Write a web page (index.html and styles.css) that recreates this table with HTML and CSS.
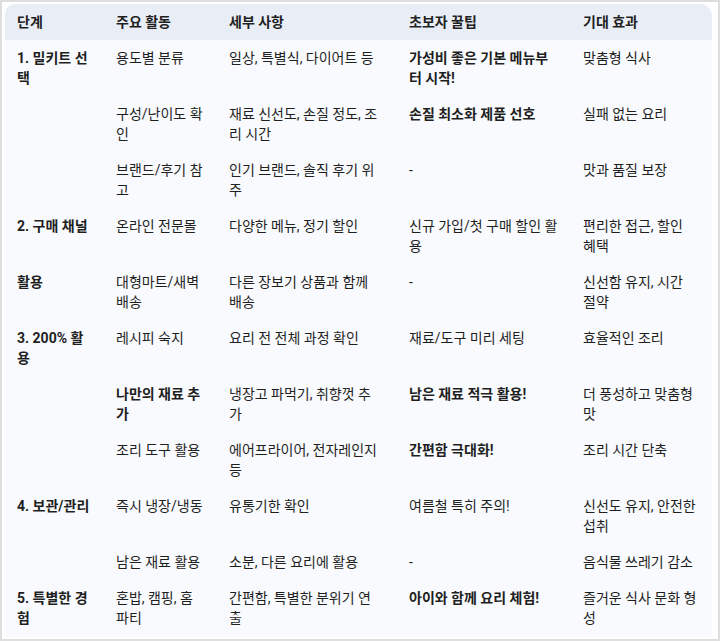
FILE: index.html
```html
<!DOCTYPE html>
<html lang="ko">
<head>
<meta charset="utf-8">
<link rel="stylesheet" href="styles.css">
</head>
<body>
<div class="frame">
  <div class="card">
    <table class="grid">
      <colgroup>
        <col class="c1"><col class="c2"><col class="c3"><col class="c4"><col class="c5">
      </colgroup>
      <thead>
        <tr><th>단계</th><th>주요 활동</th><th>세부 사항</th><th>초보자 꿀팁</th><th>기대 효과</th></tr>
      </thead>
      <tbody>
        <tr><td class="b">1. 밀키트 선택</td><td>용도별 분류</td><td>일상, 특별식, 다이어트 등</td><td class="b">가성비 좋은 기본 메뉴부터 시작!</td><td>맞춤형 식사</td></tr>
        <tr><td></td><td>구성/난이도 확인</td><td>재료 신선도, 손질 정도, 조리 시간</td><td class="b">손질 최소화 제품 선호</td><td>실패 없는 요리</td></tr>
        <tr><td></td><td>브랜드/후기 참고</td><td>인기 브랜드, 솔직 후기 위주</td><td>-</td><td>맛과 품질 보장</td></tr>
        <tr><td class="b">2. 구매 채널</td><td>온라인 전문몰</td><td>다양한 메뉴, 정기 할인</td><td>신규 가입/첫 구매 할인 활용</td><td>편리한 접근, 할인 혜택</td></tr>
        <tr><td class="b">활용</td><td>대형마트/새벽 배송</td><td>다른 장보기 상품과 함께 배송</td><td>-</td><td>신선함 유지, 시간 절약</td></tr>
        <tr><td class="b">3. 200% 활용</td><td>레시피 숙지</td><td>요리 전 전체 과정 확인</td><td>재료/도구 미리 세팅</td><td>효율적인 조리</td></tr>
        <tr><td></td><td class="b">나만의 재료 추가</td><td>냉장고 파먹기, 취향껏 추가</td><td class="b">남은 재료 적극 활용!</td><td>더 풍성하고 맞춤형 맛</td></tr>
        <tr><td></td><td>조리 도구 활용</td><td>에어프라이어, 전자레인지 등</td><td class="b">간편함 극대화!</td><td>조리 시간 단축</td></tr>
        <tr><td class="b">4. 보관/관리</td><td>즉시 냉장/냉동</td><td>유통기한 확인</td><td>여름철 특히 주의!</td><td>신선도 유지, 안전한 섭취</td></tr>
        <tr><td></td><td>남은 재료 활용</td><td>소분, 다른 요리에 활용</td><td>-</td><td>음식물 쓰레기 감소</td></tr>
        <tr><td class="b">5. 특별한 경험</td><td>혼밥, 캠핑, 홈파티</td><td>간편함, 특별한 분위기 연출</td><td class="b">아이와 함께 요리 체험!</td><td>즐거운 식사 문화 형성</td></tr>
      </tbody>
    </table>
  </div>
</div>
</body>
</html>
```
FILE: styles.css
```css
* { box-sizing: border-box; }
html, body { margin: 0; padding: 0; background: #ffffff; }
body {
  font-family: Roboto, "Noto Sans CJK KR", sans-serif;
  font-size: 14px;
  line-height: 20px;
  color: #1f1f1f;
}
.frame {
  width: 720px;
  height: 641px;
  border: 2px solid #dedede;
  padding: 2px 6px 2px 3px;
  background: #ffffff;
}
.card {
  width: 707px;
  height: 633px;
  background: #f8fafd;
  border-radius: 10px 12px 0 0;
  overflow: hidden;
}
.grid {
  width: 707px;
  table-layout: fixed;
  border-collapse: collapse;
}
.c1 { width: 99px; }
.c2 { width: 113px; }
.c3 { width: 180px; }
.c4 { width: 174px; }
.c5 { width: 141px; }
.grid th, .grid td {
  padding: 8px 12px;
  text-align: left;
  vertical-align: top;
}
.grid th {
  background: #e9eef6;
  font-weight: 700;
}
.grid td:nth-child(3), .grid th:nth-child(3) { padding-right: 18px; }
.grid td:nth-child(5), .grid th:nth-child(5) { padding-right: 14px; }
.grid td.b { font-weight: 700; }
```
